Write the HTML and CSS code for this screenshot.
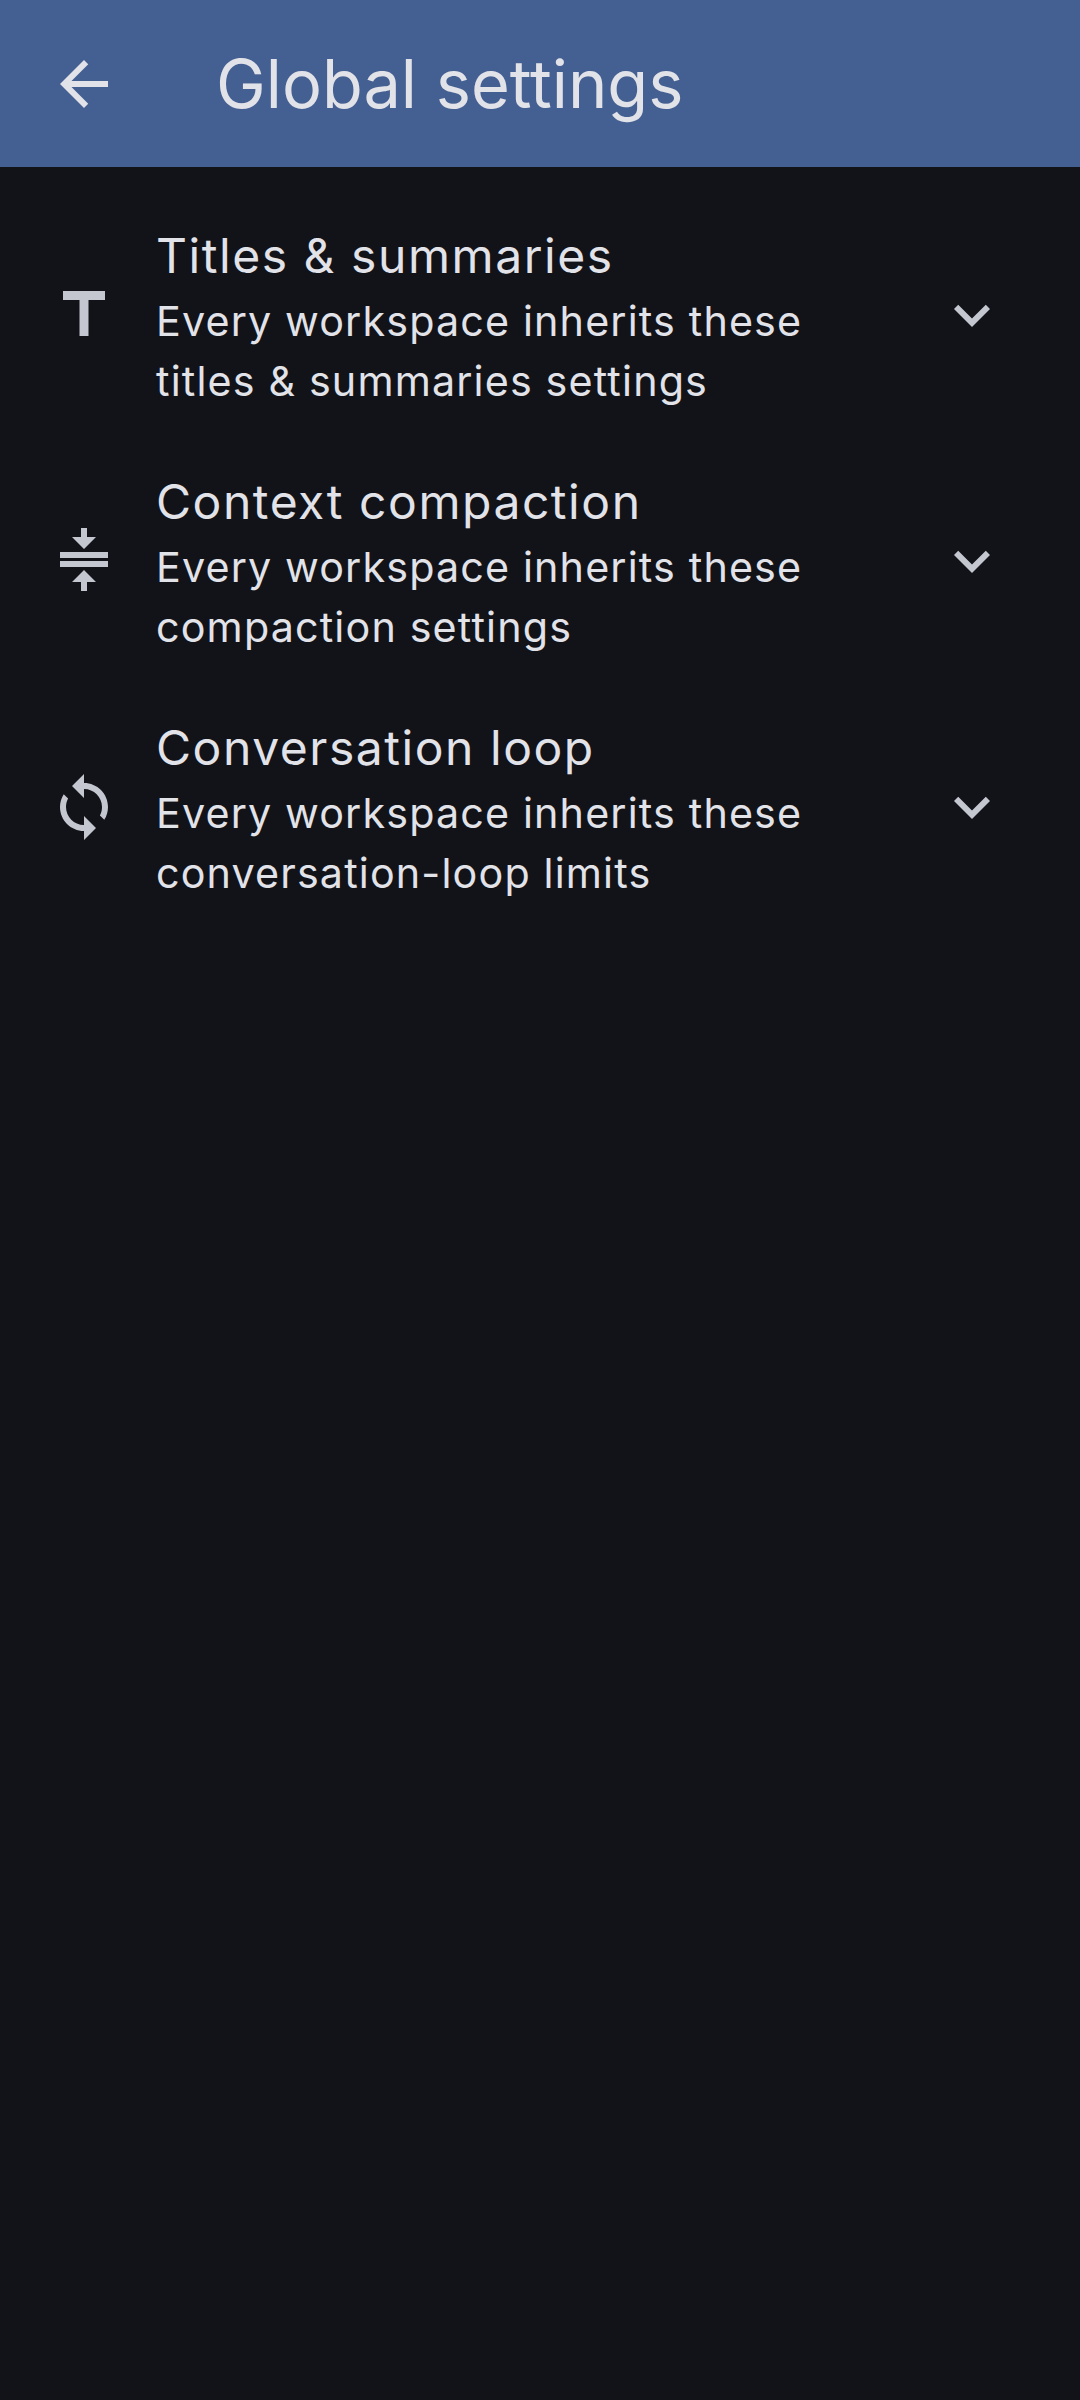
FILE: index.html
```html
<!DOCTYPE html>
<html lang="en">
<head>
    <meta charset="UTF-8">
    <meta name="viewport" content="width=device-width, initial-scale=1.0">
    <title>Global settings</title>
    <link rel="stylesheet" href="styles.css">
</head>
<body>
<header class="app-bar">
    <svg class="icon back-icon" viewBox="0 0 24 24"><path d="M20 11H7.83l5.59-5.59L12 4l-8 8 8 8 1.41-1.41L7.83 13H20v-2z"/></svg>
    <h1>Global settings</h1>
</header>
<main class="settings-list">
    <div class="setting-row">
        <svg class="icon" viewBox="0 0 24 24"><path d="M5 4v3h5.5v12h3V7H19V4z"/></svg>
        <div class="setting-text">
            <h2>Titles &amp; summaries</h2>
            <p>Every workspace inherits these titles &amp; summaries settings</p>
        </div>
        <svg class="icon chevron" viewBox="0 0 24 24"><path d="M16.59 8.59 12 13.17 7.41 8.59 6 10l6 6 6-6z"/></svg>
    </div>
    <div class="setting-row">
        <svg class="icon" viewBox="0 0 24 24"><path d="M8 19h3v3h2v-3h3l-4-4-4 4zm8-15h-3V1h-2v3H8l4 4 4-4zM4 9v2h16V9H4zm0 3h16v2H4z"/></svg>
        <div class="setting-text">
            <h2>Context compaction</h2>
            <p>Every workspace inherits these compaction settings</p>
        </div>
        <svg class="icon chevron" viewBox="0 0 24 24"><path d="M16.59 8.59 12 13.17 7.41 8.59 6 10l6 6 6-6z"/></svg>
    </div>
    <div class="setting-row">
        <svg class="icon" viewBox="0 0 24 24"><path d="M12 4V1L8 5l4 4V6c3.31 0 6 2.69 6 6 0 1.01-.25 1.97-.7 2.8l1.46 1.46C19.54 15.03 20 13.57 20 12c0-4.42-3.58-8-8-8zm0 14c-3.31 0-6-2.69-6-6 0-1.01.25-1.97.7-2.8L5.24 7.74C4.46 8.97 4 10.43 4 12c0 4.42 3.58 8 8 8v3l4-4-4-4v3z"/></svg>
        <div class="setting-text">
            <h2>Conversation loop</h2>
            <p>Every workspace inherits these conversation-loop limits</p>
        </div>
        <svg class="icon chevron" viewBox="0 0 24 24"><path d="M16.59 8.59 12 13.17 7.41 8.59 6 10l6 6 6-6z"/></svg>
    </div>
</main>
</body>
</html>
```

FILE: styles.css
```css
body {
    font-family: Inter, "Noto Sans", sans-serif;
    margin: 0;
    min-height: 2400px;
    background: #111318;
    color: #e2e2e9;
}
.app-bar {
    display: flex;
    align-items: center;
    height: 167px;
    padding-left: 48px;
    background: #445f91;
}
.app-bar h1 {
    margin: 2px 0 0 96px;
    font-size: 66.7px;
    font-weight: 400;
    line-height: 1;
}
.settings-list {
    padding-top: 25px;
}
.setting-row {
    display: flex;
    align-items: center;
    height: 246px;
    padding: 0 72px 0 48px;
}
.icon {
    width: 72px;
    height: 72px;
    flex: none;
    fill: #c4c6d0;
}
.back-icon {
    fill: #e2e2e9;
}
.chevron {
    margin-left: auto;
}
.setting-text {
    width: 720px;
    margin-left: 36px;
    padding-top: 4px;
}
.setting-text h2 {
    margin: 0 0 2px;
    font-size: 48px;
    font-weight: 400;
    line-height: 66px;
    letter-spacing: 1.55px;
}
.setting-text p {
    margin: 0;
    font-size: 41.25px;
    line-height: 60px;
    letter-spacing: 1.15px;
}
```
